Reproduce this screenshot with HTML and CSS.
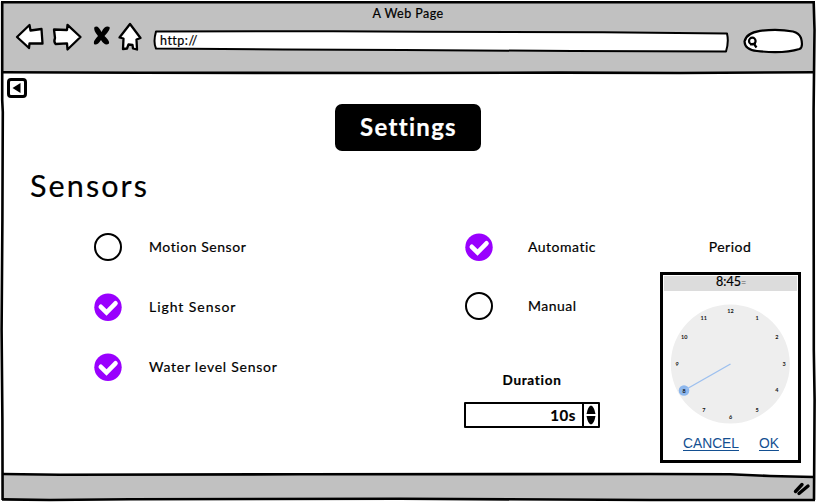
FILE: index.html
```html
<!DOCTYPE html>
<html lang="en">
<head>
<meta charset="utf-8">
<title>A Web Page</title>
<link rel="stylesheet" href="styles.css">
</head>
<body>
<div class="window">
  <svg class="frame" viewBox="0 0 816 502" aria-hidden="true">
    <path class="chrome" d="M3 2H813V72.500H3ZM3 474.500L700 474L813 477V500L3 499Z"/>
    <path class="line" d="M1 2.200H815M2.200 2V100L2.800 112L2.400 220L1.600 330L2.400 420L2.600 500M813.700 2L814.500 30L813.600 110L813.800 350L814.600 400L814 500"/>
    <path class="line" d="M3 72.300L140 72.800L400 73L560 72.600L680 73L814 72.200M3 474L60 474.700L300 474.300L650 474L730 474.300L770 476L814 477M2 499.400L50 500L130 499.200L400 498.800L650 500L815 500"/>
  </svg>

  <header class="browser">
    <div class="title">A Web Page</div>
    <div class="toolbar">
      <svg class="nav" viewBox="10 20 135 34">
        <g class="outline">
          <path d="M17 37L29.500 25L30.500 30.500L41.500 29L42.500 43.500L29.500 43.500L29 48Z"/>
          <path d="M54 29.500L67 30L67.500 24.800L80.500 37L67.500 49.500L67 43.300L55.500 44Q53.500 42 55 38Z"/>
          <path d="M119.500 37.500L130 24L140.500 38L136.500 39.500L137 49.500L133 48.500L132.500 45L128.500 44.500L127 48.500L123 49L123.500 38.500Z"/>
        </g>
        <path class="cross" d="M94.500 27Q98 24.500 101.500 32Q105 25 109.500 27Q111 29 104.500 36Q110 41 109 43.500Q105 46.500 101 40Q97 46 94 44Q93 41 98 36Q93 30 94.500 27Z"/>
      </svg>
      <div class="address">
        <svg viewBox="0 0 576 22"><path d="M3 1.500L180 1.200L270 1.800L450 2.200L574 3.500Q576 12 573 21.500L420 21L250 20L130 19.500L3 18.500Q0 12 3 1.500Z"/></svg>
        <span>http://</span>
      </div>
      <svg class="search" viewBox="742 26 64 30">
        <path class="pill" d="M757 51Q745 50 744.500 41.500Q746 33 760 30.800Q778 28.500 793 31.500Q799 33 801 38Q803.500 47 799.500 49Q783 54 757 51Z"/>
        <circle cx="752.300" cy="41" r="3.300"/><path d="M750 44.300L756 43.500M754 44L756.500 47.500"/>
      </svg>
    </div>
  </header>

  <main class="page">
    <button class="back" aria-label="Back"><svg viewBox="0 0 20 20"><path d="M5.500 10L13.500 5V15Z"/></svg></button>
    <h1 class="banner"><span>Settings</span></h1>
    <h2 class="section"><span>Sensors</span></h2>

    <div class="columns">
      <ul class="options sensors">
        <li><i class="radio"></i><span class="t-motion">Motion Sensor</span></li>
        <li><svg class="check" viewBox="0 0 28 28"><circle cx="14" cy="14.300" r="13.700"/><path d="M6.800 13.800L12.500 19.500L21.500 10.300"/></svg><span class="t-light">Light Sensor</span></li>
        <li><svg class="check" viewBox="0 0 28 28"><circle cx="14" cy="14.300" r="13.700"/><path d="M6.800 13.800L12.500 19.500L21.500 10.300"/></svg><span class="t-water">Water level Sensor</span></li>
      </ul>

      <div class="mode">
        <ul class="options">
          <li><svg class="check" viewBox="0 0 28 28"><circle cx="14" cy="14.300" r="13.700"/><path d="M6.800 13.800L12.500 19.500L21.500 10.300"/></svg><span>Automatic</span></li>
          <li><i class="radio"></i><span>Manual</span></li>
        </ul>
        <div class="duration"><span>Duration</span></div>
        <div class="stepper">
          <span class="value">10s</span>
          <svg viewBox="0 0 14 22"><path d="M2.500 10Q4 2 7 1.500Q10 2 11.500 10ZM2.500 12H11.500Q10 20 7 20.500Q4 20 2.500 12Z"/></svg>
        </div>
      </div>

      <div class="period">
        <div class="label"><span>Period</span></div>
        <div class="picker">
          <div class="time"><span>8:45</span><small>=</small></div>
          <svg class="clock" viewBox="-60 -60 120 120">
            <circle class="face" cx=".300" r="59.500"/>
            <circle class="knob" cx="-46" cy="26.500" r="5.300"/>
            <path class="hand" d="M.500 0L-46 26.500"/>
            <g class="hours" transform="translate(.5 0)">
              <text x="0" y="-51.500">12</text><text x="26.700" y="-44.500">1</text><text x="46.300" y="-24.700">2</text>
              <text x="53.500" y="2">3</text><text x="46.300" y="28.200">4</text><text x="26.700" y="48">5</text>
              <text x="0" y="55">6</text><text x="-26.700" y="48">7</text><text x="-46.300" y="28.500">8</text>
              <text x="-53.500" y="2">9</text><text x="-46.300" y="-24.700">10</text><text x="-26.700" y="-44.500">11</text>
            </g>
          </svg>
          <div class="actions"><a href="#">CANCEL</a><a href="#">OK</a></div>
        </div>
      </div>
    </div>
  </main>

  <footer class="status"><svg viewBox="0 0 20 16"><path d="M3.500 11.500L10 4.500M7 13.500L16 6"/></svg></footer>
</div>
</body>
</html>
```
FILE: styles.css
```css
* { box-sizing: border-box; }
body { margin: 0; background: #fff; color: #000; font-family: Lato, sans-serif; overflow: hidden; -webkit-text-stroke: .2px; }
svg { display: block; flex: none; }
h1, h2, ul { margin: 0; padding: 0; font-weight: 400; list-style: none; }

.window { position: relative; width: 816px; height: 502px; display: grid; grid-template-rows: 74px 400px 28px; isolation: isolate; }
.frame { position: absolute; inset: 0; z-index: -1; width: 816px; height: 502px; }
.chrome { fill: #c1c1c1; }
.line { fill: none; stroke: #000; stroke-width: 2.6; stroke-linejoin: round; }

.title { height: 26px; line-height: 26px; padding-top: 1px; text-align: center; font-size: 12.5px; letter-spacing: .45px; }
.toolbar { display: flex; height: 36px; padding: 0 0 0 10px; margin-top: -6px; }
.nav { width: 135px; height: 34px; }
.outline { fill: #fff; stroke: #000; stroke-width: 2.3; stroke-linejoin: round; }
.cross { fill: #000; }
.address { position: relative; width: 576px; height: 22px; margin: 10px 0 0 8px; }
.address svg { position: absolute; inset: 0; width: 576px; height: 22px; overflow: visible; }
.address path { fill: #fff; stroke: #000; stroke-width: 2; stroke-linejoin: round; }
.address span { position: relative; display: block; padding-left: 7px; line-height: 21px; font-size: 12.5px; letter-spacing: .5px; }
.search { width: 64px; height: 30px; margin: 6px 0 0 13px; fill: none; stroke: #000; stroke-width: 2.2; }
.pill { fill: #fff; }

.page { display: flex; flex-direction: column; }
.back { width: 20px; height: 20px; margin: 4px 0 0 7px; padding: 0; border: 3px solid #000; border-radius: 4px; background: #fff; display: grid; place-items: center; flex: none; }
.back svg { width: 20px; height: 20px; margin: -3px; }
.banner { width: 146px; height: 47px; margin: 6px 0 0 335px; border-radius: 7px; background: #000; color: #fff; text-align: center; font-size: 24px; line-height: 45px; font-weight: 700; letter-spacing: 1.3px; padding-left: 1px; }
.section { height: 40px; margin: 14px 0 0 30px; line-height: 40px; font-size: 30.5px; letter-spacing: 2.1px; }
.columns { display: flex; height: 268px; padding: 28px 0 0 94px; }

.options { display: grid; grid-template-rows: 60px 60px; grid-auto-rows: 60px; }
.options li { display: flex; height: 28px; gap: 27px; align-items: center; font-size: 14px; line-height: 20px; letter-spacing: .5px; white-space: nowrap; }
.options li span { margin-top: -1px; }
.options .t-motion { letter-spacing: .55px; }
.options .t-light { letter-spacing: .95px; }
.options .t-water { letter-spacing: .75px; }
.radio { width: 28px; height: 28px; border: 2px solid #000; border-radius: 50%; flex: none; }
.check { width: 28px; height: 28px; }
.check circle { fill: #9900fe; }
.check path { fill: none; stroke: #fff; stroke-width: 4.6; stroke-linecap: round; stroke-linejoin: miter; }
.sensors { width: 370px; }
.mode { width: 136px; }
.mode .options { grid-template-rows: 59px 60px; padding-left: 1px; }
.mode .options li { gap: 35px; }
.duration { height: 20px; margin-top: 18px; line-height: 20px; text-align: center; font-size: 13.5px; font-weight: 700; letter-spacing: .7px; }
.stepper { display: flex; width: 136px; height: 26px; margin-top: 12px; border: 2px solid #000; border-radius: 1px; }
.value { flex: 1; padding-right: 6px; text-align: right; border-right: 2px solid #000; font-weight: 700; font-size: 15px; line-height: 22px; letter-spacing: .6px; }
.stepper svg { width: 14px; height: 22px; }

.period { width: 141px; margin-left: 60px; }
.label { height: 28px; line-height: 28px; text-align: center; font-size: 14px; letter-spacing: .5px; padding-right: 1px; }
.picker { width: 141px; height: 191px; margin-top: 11px; border: 3px solid #000; background: #fff; }
.time { height: 15px; margin: 1px 1px 0; background: #dcdcdc; display: flex; justify-content: center; font-size: 12.5px; line-height: 12px; padding-left: 1px; }
.time small { font: 9px/12px "DejaVu Sans", sans-serif; color: #555; width: 5px; transform: scaleX(.7); transform-origin: left; -webkit-text-stroke: 0; }
.clock { width: 120px; height: 120px; margin: 13px 0 0 7px; }
.face { fill: #eee; }
.knob { fill: #8db7ed; }
.hand { stroke: #9dc0ef; stroke-width: 1.4; }
.hours { font: 700 5.500px Lato, sans-serif; text-anchor: middle; fill: #111; }
.actions { display: flex; gap: 20px; margin: 11px 0 0 20px; font: 13.8px/18px "Liberation Sans", sans-serif; -webkit-text-stroke: 0; }
.actions a { color: #134f91; text-decoration: underline; text-underline-offset: 2px; }

.status { display: flex; justify-content: flex-end; padding: 6px 4px 0 0; }
.status svg { width: 20px; height: 16px; fill: none; stroke: #000; stroke-width: 3.4; stroke-linecap: round; }
```
